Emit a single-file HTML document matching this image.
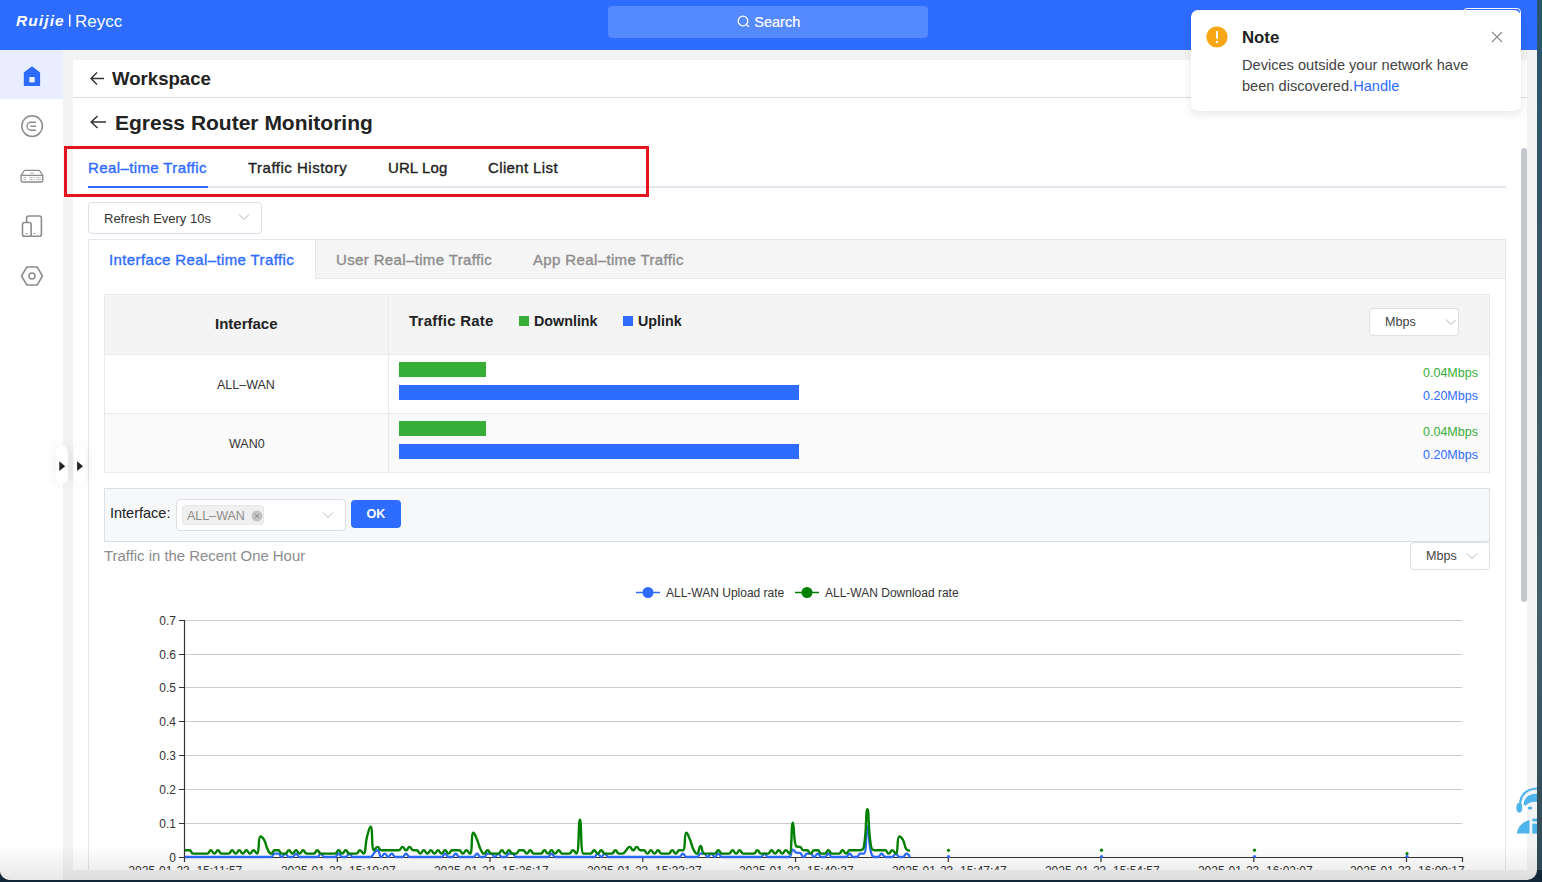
<!DOCTYPE html>
<html><head><meta charset="utf-8">
<style>
*{box-sizing:border-box;margin:0;padding:0}
html,body{width:1542px;height:882px;overflow:hidden}
body{background:#13293a;font-family:"Liberation Sans",sans-serif;position:relative;color:#222}
.abs{position:absolute}
.win{position:absolute;left:0;top:0;width:1537px;height:880px;background:#f3f3f3;border-radius:0 0 10px 10px;overflow:hidden}
.top{position:absolute;left:0;top:0;width:1537px;height:50px;background:#2e6bff}
.search{position:absolute;left:608px;top:6px;width:320px;height:32px;background:#5589ff;border-radius:4px;color:#fff;font-size:14.5px}
.side{position:absolute;left:0;top:50px;width:63px;height:830px;background:#fff}
.card{position:absolute;left:73px;top:60px;width:1454px;height:810px;background:#fff;overflow:hidden}
.t{position:absolute;white-space:nowrap;line-height:1}
.b{font-weight:700}
.m{font-weight:400;-webkit-text-stroke:0.35px currentColor}
</style></head><body>
<div class="abs" style="left:1537px;top:0;width:5px;height:870px;background:linear-gradient(#2a5670,#3b5862 40%,#44606a 70%,#2f4853)"></div>
<div class="win">
  <div class="top">
    <svg class="abs" style="left:0;top:0" width="140" height="50">
      <text x="16" y="25.6" font-family="Liberation Sans" font-weight="700" font-style="italic" font-size="15.5" fill="#fff" letter-spacing="1.1">Ruijie</text>
      <rect x="69" y="14.5" width="1.5" height="12" fill="#fff"/>
      <text x="75" y="26.5" font-family="Liberation Sans" font-size="17" fill="#fff">Reycc</text>
      <rect x="89.5" y="21" width="3" height="1.3" fill="#2ad0b0"/><rect x="108.5" y="21" width="3" height="1.3" fill="#2ad0b0"/><rect x="118" y="21" width="3" height="1.3" fill="#2ad0b0"/>
    </svg>
    <div class="search">
      <svg class="abs" style="left:128.5px;top:9.3px" width="13" height="13" viewBox="0 0 13 13"><circle cx="6" cy="6" r="4.8" fill="none" stroke="#fff" stroke-width="1.3"/><path d="M9.5 9.5L12 12" stroke="#fff" stroke-width="1.3"/></svg>
      <span class="t" style="left:146.3px;top:9px;-webkit-text-stroke:0.2px #fff">Search</span>
    </div>
    <div class="abs" style="left:1463px;top:8px;width:58px;height:32px;border:1px solid #fff;border-radius:4px"></div>
  </div>
  <div class="side">
    <div class="abs" style="left:0;top:0;width:63px;height:49px;background:#e8eeff"></div>
    <svg class="abs" style="left:0;top:0" width="63" height="260" viewBox="0 50 63 260">
      <path d="M23.8 72.6 L32 66.3 L40.1 72.6 V86 H23.8 Z" fill="#2e6bff"/>
      <rect x="29.3" y="77" width="5.4" height="5.4" fill="#e8eeff"/>
      <circle cx="32.1" cy="126.1" r="10.3" fill="none" stroke="#8c8c8c" stroke-width="1.5"/>
      <path d="M36 122.2 H31 A4 4 0 0 0 31 130.2 H36 M30.5 126.2 H36" fill="none" stroke="#8c8c8c" stroke-width="1.4"/>
      <path d="M24.6 170.4 H38.9 Q39.5 170.4 39.9 171 L42.8 175.4 V180.6 Q42.8 182 41.4 182 H22.5 Q21.1 182 21.1 180.6 V175.4 L24 171 Q24.2 170.4 24.6 170.4 Z M21.1 175.3 H42.8" fill="none" stroke="#8c8c8c" stroke-width="1.35"/>
      <path d="M29.3 177.6h5.2 M36.3 177.6h5 M29.3 179.6h5.2 M36.3 179.6h5 M23.5 177.6h3.3 M23.5 179.6h2.5" stroke="#9a9a9a" stroke-width="0.9" stroke-dasharray="1.1 0.5"/>
      <path d="M30 173.1h4" stroke="#b0b0b0" stroke-width="0.9"/>
      <rect x="26.6" y="216" width="14.8" height="20.2" rx="2" fill="none" stroke="#8c8c8c" stroke-width="1.6"/>
      <rect x="22.5" y="222.5" width="8.6" height="13.7" rx="1.8" fill="#fff" stroke="#8c8c8c" stroke-width="1.6"/>
      <path d="M25.5 233.5h2 M33.5 233.5h2" stroke="#8c8c8c" stroke-width="1.2"/>
      <path d="M21.5 276 L26.8 267 H37.2 L42.5 276 L37.2 285 H26.8 Z" fill="none" stroke="#8c8c8c" stroke-width="1.6"/>
      <circle cx="32" cy="276" r="3" fill="none" stroke="#8c8c8c" stroke-width="1.5"/>
    </svg>
  </div>
  <div class="card">
    <!-- header rows -->
    <svg class="abs" style="left:17px;top:11px" width="16" height="16"><path d="M1.5 7.5 H14 M7 1.5 L1 7.5 L7 13.5" fill="none" stroke="#333" stroke-width="1.4"/></svg>
    <span class="t b" style="left:39px;top:10px;font-size:18.6px;color:#222">Workspace</span>
    <div class="abs" style="left:0;top:37px;width:1454px;height:1px;background:#dcdcdc"></div>
    <svg class="abs" style="left:17px;top:55px" width="18" height="16"><path d="M1.5 7 H16 M7.5 1 L1.2 7 L7.5 13" fill="none" stroke="#333" stroke-width="1.5"/></svg>
    <span class="t b" style="left:42px;top:52px;font-size:21px;color:#222">Egress Router Monitoring</span>

    <!-- tabs -->
    <div class="abs" style="left:15px;top:126px;width:1418px;height:2px;background:#e4e7ed"></div>
    <div class="abs" style="left:15px;top:126px;width:120px;height:2px;background:#2e6bff"></div>
    <span class="t m" style="left:15px;top:100px;font-size:15px;letter-spacing:0.39px;color:#2e6bff">Real–time Traffic</span>
    <span class="t m" style="left:175px;top:100px;font-size:15px;letter-spacing:0.5px;color:#222">Traffic History</span>
    <span class="t m" style="left:315px;top:100px;font-size:15px;letter-spacing:0.1px;color:#222">URL Log</span>
    <span class="t m" style="left:415px;top:100px;font-size:15px;letter-spacing:0.37px;color:#222">Client List</span>

    <!-- refresh select -->
    <div class="abs" style="left:15px;top:142px;width:174px;height:32px;border:1px solid #dcdfe6;border-radius:4px"></div>
    <span class="t" style="left:31px;top:152px;font-size:13px;color:#333">Refresh Every 10s</span>
    <svg class="abs" style="left:165px;top:153px" width="12" height="8"><path d="M1 1.5 L6 6.5 L11 1.5" fill="none" stroke="#b4b4b4" stroke-width="1"/></svg>

    <!-- panel -->
    <div class="abs" style="left:15px;top:179px;width:1418px;height:700px;border:1px solid #e4e7ed;background:#fff"></div>
    <div class="abs" style="left:242px;top:179px;width:1191px;height:40px;background:#f5f5f5;border:1px solid #e4e7ed;border-left:1px solid #e4e7ed"></div>
    <span class="t m" style="left:36px;top:192px;font-size:15px;letter-spacing:0.38px;color:#2e6bff">Interface Real–time Traffic</span>
    <span class="t m" style="left:263px;top:192px;font-size:15px;letter-spacing:0.36px;color:#8c8c8c">User Real–time Traffic</span>
    <span class="t m" style="left:460px;top:192px;font-size:15px;letter-spacing:0.37px;color:#8c8c8c">App Real–time Traffic</span>

    <!-- table -->
    <div class="abs" style="left:31px;top:234px;width:1386px;height:179px;border:1px solid #e8eaf0"></div>
    <div class="abs" style="left:32px;top:235px;width:1384px;height:59px;background:#f4f4f5"></div>
    <div class="abs" style="left:32px;top:294px;width:1384px;height:1px;background:#e8eaf0"></div>
    <div class="abs" style="left:32px;top:354px;width:1384px;height:58px;background:#fafafa"></div>
    <div class="abs" style="left:32px;top:353px;width:1384px;height:1px;background:#e8eaf0"></div>
    <div class="abs" style="left:315px;top:235px;width:1px;height:177px;background:#e8eaf0"></div>
    <span class="t b" style="left:142px;top:256px;font-size:15px;color:#222">Interface</span>
    <span class="t b" style="left:336px;top:253.2px;font-size:15px;letter-spacing:0.25px;color:#222">Traffic Rate</span>
    <div class="abs" style="left:446px;top:256px;width:10px;height:10px;background:#36ae37"></div>
    <span class="t b" style="left:461px;top:253.5px;font-size:14.3px;color:#222">Downlink</span>
    <div class="abs" style="left:550px;top:256px;width:10px;height:10px;background:#2e6bff"></div>
    <span class="t b" style="left:565px;top:253.5px;font-size:14.3px;color:#222">Uplink</span>
    <div class="abs" style="left:1296px;top:248px;width:90px;height:28px;border:1px solid #dcdfe6;border-radius:4px;background:#fff"></div>
    <span class="t" style="left:1312px;top:255.5px;font-size:12.6px;color:#444">Mbps</span>
    <svg class="abs" style="left:1372px;top:258px" width="12" height="8"><path d="M1 1.5 L6 6.5 L11 1.5" fill="none" stroke="#b4b4b4" stroke-width="1"/></svg>

    <span class="t" style="left:144px;top:319px;font-size:12.5px;color:#333">ALL–WAN</span>
    <div class="abs" style="left:326px;top:302px;width:87px;height:15px;background:#36ae37"></div>
    <div class="abs" style="left:326px;top:325px;width:400px;height:15px;background:#2e6bff"></div>
    <span class="t" style="left:1350px;top:307px;font-size:12.5px;color:#36ae37">0.04Mbps</span>
    <span class="t" style="left:1350px;top:330px;font-size:12.5px;color:#2e6bff">0.20Mbps</span>

    <span class="t" style="left:156px;top:378px;font-size:12.5px;color:#333">WAN0</span>
    <div class="abs" style="left:326px;top:361px;width:87px;height:15px;background:#36ae37"></div>
    <div class="abs" style="left:326px;top:384px;width:400px;height:15px;background:#2e6bff"></div>
    <span class="t" style="left:1350px;top:366px;font-size:12.5px;color:#36ae37">0.04Mbps</span>
    <span class="t" style="left:1350px;top:389px;font-size:12.5px;color:#2e6bff">0.20Mbps</span>

    <!-- filter -->
    <div class="abs" style="left:31px;top:428px;width:1386px;height:54px;border:1px solid #dcdfe6;background:#f7f8fa"></div>
    <span class="t" style="left:37px;top:446px;font-size:14.5px;color:#222">Interface:</span>
    <div class="abs" style="left:103px;top:439px;width:170px;height:32px;border:1px solid #dcdfe6;border-radius:4px;background:#fff"></div>
    <div class="abs" style="left:109px;top:445px;width:82px;height:20px;background:#f0f0f0;border:1px solid #e6e6e6;border-radius:3px"></div>
    <span class="t" style="left:114px;top:450px;font-size:12.5px;color:#8c8c8c">ALL–WAN</span>
    <svg class="abs" style="left:178px;top:450px" width="12" height="12"><circle cx="6" cy="6" r="5.5" fill="#c4c4c4"/><path d="M3.8 3.8 L8.2 8.2 M8.2 3.8 L3.8 8.2" stroke="#8c8c8c" stroke-width="1"/></svg>
    <svg class="abs" style="left:249px;top:451px" width="12" height="8"><path d="M1 1.5 L6 6.5 L11 1.5" fill="none" stroke="#b4b4b4" stroke-width="1"/></svg>
    <div class="abs" style="left:278px;top:440px;width:50px;height:28px;background:#2e6bff;border-radius:4px"></div>
    <span class="t b" style="left:293.5px;top:447.5px;font-size:12.6px;color:#fff">OK</span>

    <span class="t" style="left:31px;top:489px;font-size:14.9px;color:#8c8c8c">Traffic in the Recent One Hour</span>
    <div class="abs" style="left:1337px;top:482px;width:80px;height:28px;border:1px solid #dcdfe6;border-radius:4px;background:#fff"></div>
    <span class="t" style="left:1353px;top:490px;font-size:12.6px;color:#444">Mbps</span>
    <svg class="abs" style="left:1393px;top:492px" width="12" height="8"><path d="M1 1.5 L6 6.5 L11 1.5" fill="none" stroke="#b4b4b4" stroke-width="1"/></svg>
  </div>

  <!-- chart (page coords) -->
  <svg class="abs" style="left:0;top:0" width="1537" height="870" viewBox="0 0 1537 870">
    <g font-family="Liberation Sans" font-size="12" fill="#333">
      <line x1="636" y1="592.5" x2="660" y2="592.5" stroke="#2e6bff" stroke-width="1.5"/>
      <circle cx="648" cy="592.5" r="5.5" fill="#2e6bff"/>
      <text x="666" y="597">ALL-WAN Upload rate</text>
      <line x1="795" y1="592.5" x2="819" y2="592.5" stroke="#008000" stroke-width="1.5"/>
      <circle cx="807" cy="592.5" r="5.5" fill="#008000"/>
      <text x="825" y="597">ALL-WAN Download rate</text>
    </g>
    <g stroke="#cccccc" stroke-width="1">
      <line x1="184" y1="620.5" x2="1462" y2="620.5"/>
      <line x1="184" y1="654.5" x2="1462" y2="654.5"/>
      <line x1="184" y1="687.5" x2="1462" y2="687.5"/>
      <line x1="184" y1="721.5" x2="1462" y2="721.5"/>
      <line x1="184" y1="755.5" x2="1462" y2="755.5"/>
      <line x1="184" y1="789.5" x2="1462" y2="789.5"/>
      <line x1="184" y1="823.5" x2="1462" y2="823.5"/>
    </g>
    <g stroke="#333" stroke-width="1.2" fill="none">
      <path d="M184.5 620 V857.5 H1462.5 V862"/>
      <path d="M179 620.5 H184 M179 654.5 H184 M179 687.5 H184 M179 721.5 H184 M179 755.5 H184 M179 789.5 H184 M179 823.5 H184 M179 857.5 H184"/>
      <path d="M184.5 857 V862 M337.3 857 V862 M490 857 V862 M642.8 857 V862 M795.5 857 V862 M948.3 857 V862 M1101 857 V862 M1253.8 857 V862 M1406.5 857 V862"/>
    </g>
    <g font-family="Liberation Sans" font-size="12" fill="#333" text-anchor="end">
      <text x="176" y="625">0.7</text><text x="176" y="659">0.6</text><text x="176" y="692">0.5</text><text x="176" y="726">0.4</text>
      <text x="176" y="760">0.3</text><text x="176" y="794">0.2</text><text x="176" y="828">0.1</text><text x="176" y="862">0</text>
    </g>
    <g font-family="Liberation Sans" font-size="12" fill="#333" text-anchor="middle" style="white-space:pre">
      <text x="185.3" y="875">2025-01-23 &#160;15:11:57</text><text x="338.3" y="875">2025-01-23 &#160;15:19:07</text><text x="491.3" y="875">2025-01-23 &#160;15:26:17</text>
      <text x="644.3" y="875">2025-01-23 &#160;15:33:27</text><text x="796.3" y="875">2025-01-23 &#160;15:40:37</text><text x="949.3" y="875">2025-01-23 &#160;15:47:47</text>
      <text x="1102.3" y="875">2025-01-23 &#160;15:54:57</text><text x="1255.3" y="875">2025-01-23 &#160;16:02:07</text><text x="1407.3" y="875">2025-01-23 &#160;16:09:17</text>
    </g>
    <path d="M184.90,857.00C184.90,857.00 185.45,857.00 186.00,857.00C187.77,857.00 187.77,857.00 189.55,857.00C191.32,857.00 191.32,857.00 193.10,857.00C194.87,857.00 194.87,857.00 196.65,857.00C198.42,857.00 198.42,857.00 200.20,857.00C201.97,857.00 201.97,857.00 203.75,857.00C205.52,857.00 205.52,857.00 207.29,857.00C209.07,857.00 209.07,857.00 210.84,857.00C212.62,857.00 212.62,857.00 214.39,857.00C216.17,857.00 216.17,857.00 217.94,857.00C219.72,857.00 219.72,857.00 221.49,857.00C223.26,857.00 223.26,857.00 225.04,857.00C226.81,857.00 226.81,857.00 228.59,857.00C230.36,857.00 230.36,857.00 232.14,857.00C233.91,857.00 233.91,857.00 235.69,857.00C237.46,857.00 237.46,857.00 239.24,857.00C241.01,857.00 241.01,857.00 242.78,857.00C244.56,857.00 244.56,857.00 246.33,857.00C248.11,857.00 248.11,857.00 249.88,857.00C251.66,857.00 251.66,857.00 253.43,857.00C255.21,857.00 255.21,857.00 256.98,857.00C258.75,857.00 258.75,857.00 260.53,857.00C262.30,857.00 262.30,857.00 264.08,857.00C265.85,857.00 265.85,857.00 267.63,857.00C269.40,857.00 269.68,857.00 271.18,857.00C273.23,857.00 272.67,853.64 274.73,853.64C276.22,853.64 276.78,853.64 278.27,853.64C280.33,853.64 280.05,857.00 281.82,857.00C283.60,857.00 283.60,853.64 285.37,853.64C287.15,853.64 286.86,857.00 288.92,857.00C290.41,857.00 290.98,857.00 292.47,857.00C294.53,857.00 294.24,853.64 296.02,853.64C297.79,853.64 297.51,857.00 299.57,857.00C301.06,857.00 301.34,857.00 303.12,857.00C304.89,857.00 304.89,857.00 306.67,857.00C308.44,857.00 308.44,857.00 310.22,857.00C311.99,857.00 311.99,857.00 313.76,857.00C315.54,857.00 315.82,857.00 317.31,857.00C319.37,857.00 319.09,853.64 320.86,853.64C322.64,853.64 322.35,857.00 324.41,857.00C325.90,857.00 326.19,857.00 327.96,857.00C329.73,857.00 329.73,857.00 331.51,857.00C333.28,857.00 333.57,857.00 335.06,857.00C337.11,857.00 336.83,853.64 338.61,853.64C340.38,853.64 340.10,857.00 342.16,857.00C343.65,857.00 344.21,857.00 345.70,857.00C347.76,857.00 347.48,853.64 349.25,853.64C351.03,853.64 350.75,857.00 352.80,857.00C354.30,857.00 354.58,857.00 356.35,857.00C358.13,857.00 358.13,857.00 359.90,857.00C361.68,857.00 361.68,857.00 363.45,857.00C365.22,857.00 365.22,857.00 367.00,857.00C368.77,857.00 369.14,857.00 370.55,857.00C372.69,857.00 372.16,854.80 374.10,852.96C375.71,851.44 376.34,850.27 377.65,850.27C379.88,850.27 379.03,857.00 381.19,857.00C382.58,857.00 382.97,853.64 384.74,853.64C386.52,853.64 386.52,857.00 388.29,857.00C390.07,857.00 390.07,853.64 391.84,853.64C393.62,853.64 393.33,857.00 395.39,857.00C396.88,857.00 397.17,857.00 398.94,857.00C400.71,857.00 401.00,857.00 402.49,857.00C404.55,857.00 404.26,853.64 406.04,853.64C407.81,853.64 407.53,857.00 409.59,857.00C411.08,857.00 411.36,857.00 413.14,857.00C414.91,857.00 414.91,857.00 416.69,857.00C418.46,857.00 418.46,857.00 420.23,857.00C422.01,857.00 422.01,857.00 423.78,857.00C425.56,857.00 425.56,857.00 427.33,857.00C429.11,857.00 429.11,857.00 430.88,857.00C432.66,857.00 432.66,857.00 434.43,857.00C436.20,857.00 436.20,857.00 437.98,857.00C439.75,857.00 440.04,857.00 441.53,857.00C443.58,857.00 443.30,853.64 445.08,853.64C446.85,853.64 446.57,857.00 448.63,857.00C450.12,857.00 450.68,857.00 452.18,857.00C454.23,857.00 453.95,853.64 455.72,853.64C457.50,853.64 457.22,857.00 459.27,857.00C460.77,857.00 461.05,857.00 462.82,857.00C464.60,857.00 464.60,857.00 466.37,857.00C468.15,857.00 468.15,857.00 469.92,857.00C471.69,857.00 471.98,857.00 473.47,857.00C475.53,857.00 475.24,853.64 477.02,853.64C478.79,853.64 478.51,857.00 480.57,857.00C482.06,857.00 482.62,857.00 484.12,857.00C486.17,857.00 485.61,853.64 487.67,853.64C489.16,853.64 489.72,853.64 491.21,853.64C493.27,853.64 492.99,857.00 494.76,857.00C496.54,857.00 496.54,853.64 498.31,853.64C500.09,853.64 499.80,857.00 501.86,857.00C503.35,857.00 503.92,857.00 505.41,857.00C507.47,857.00 506.90,853.64 508.96,853.64C510.45,853.64 511.02,853.64 512.51,853.64C514.56,853.64 514.00,857.00 516.06,857.00C517.55,857.00 517.83,857.00 519.61,857.00C521.38,857.00 521.38,857.00 523.15,857.00C524.93,857.00 524.93,857.00 526.70,857.00C528.48,857.00 528.48,857.00 530.25,857.00C532.03,857.00 532.03,857.00 533.80,857.00C535.58,857.00 535.58,857.00 537.35,857.00C539.13,857.00 539.13,857.00 540.90,857.00C542.67,857.00 542.67,857.00 544.45,857.00C546.22,857.00 546.51,857.00 548.00,857.00C550.05,857.00 549.77,853.64 551.55,853.64C553.32,853.64 553.04,857.00 555.10,857.00C556.59,857.00 556.87,857.00 558.64,857.00C560.42,857.00 560.42,857.00 562.19,857.00C563.97,857.00 563.97,857.00 565.74,857.00C567.52,857.00 567.52,857.00 569.29,857.00C571.07,857.00 571.07,857.00 572.84,857.00C574.62,857.00 574.62,857.00 576.39,857.00C578.16,857.00 578.16,857.00 579.94,857.00C581.71,857.00 581.71,857.00 583.49,857.00C585.26,857.00 585.26,857.00 587.04,857.00C588.81,857.00 588.81,857.00 590.59,857.00C592.36,857.00 592.64,857.00 594.13,857.00C596.19,857.00 595.91,853.64 597.68,853.64C599.46,853.64 599.46,857.00 601.23,857.00C603.01,857.00 603.01,853.64 604.78,853.64C606.56,853.64 606.27,857.00 608.33,857.00C609.82,857.00 610.11,857.00 611.88,857.00C613.65,857.00 613.65,857.00 615.43,857.00C617.20,857.00 617.20,857.00 618.98,857.00C620.75,857.00 620.75,857.00 622.53,857.00C624.30,857.00 624.30,857.00 626.08,857.00C627.85,857.00 627.85,857.00 629.62,857.00C631.40,857.00 631.40,857.00 633.17,857.00C634.95,857.00 634.95,857.00 636.72,857.00C638.50,857.00 638.50,857.00 640.27,857.00C642.05,857.00 642.05,857.00 643.82,857.00C645.60,857.00 645.60,857.00 647.37,857.00C649.14,857.00 649.14,857.00 650.92,857.00C652.69,857.00 652.69,857.00 654.47,857.00C656.24,857.00 656.24,857.00 658.02,857.00C659.79,857.00 659.79,857.00 661.57,857.00C663.34,857.00 663.34,857.00 665.12,857.00C666.89,857.00 666.89,857.00 668.66,857.00C670.44,857.00 670.44,857.00 672.21,857.00C673.99,857.00 673.99,857.00 675.76,857.00C677.54,857.00 677.82,857.00 679.31,857.00C681.37,857.00 681.09,853.64 682.86,853.64C684.63,853.64 684.35,857.00 686.41,857.00C687.90,857.00 688.18,857.00 689.96,857.00C691.73,857.00 691.73,857.00 693.51,857.00C695.28,857.00 695.56,857.00 697.06,857.00C699.11,857.00 698.55,853.64 700.61,853.64C702.10,853.64 702.66,853.64 704.15,853.64C706.21,853.64 705.93,857.00 707.70,857.00C709.48,857.00 709.48,853.64 711.25,853.64C713.03,853.64 713.03,857.00 714.80,857.00C716.58,857.00 716.58,853.64 718.35,853.64C720.12,853.64 719.84,857.00 721.90,857.00C723.39,857.00 723.67,857.00 725.45,857.00C727.22,857.00 727.22,857.00 729.00,857.00C730.77,857.00 730.77,857.00 732.55,857.00C734.32,857.00 734.32,857.00 736.10,857.00C737.87,857.00 737.87,857.00 739.64,857.00C741.42,857.00 741.42,857.00 743.19,857.00C744.97,857.00 744.97,857.00 746.74,857.00C748.52,857.00 748.52,857.00 750.29,857.00C752.07,857.00 752.07,857.00 753.84,857.00C755.61,857.00 755.61,857.00 757.39,857.00C759.16,857.00 759.45,857.00 760.94,857.00C762.99,857.00 762.71,853.64 764.49,853.64C766.26,853.64 765.98,857.00 768.04,857.00C769.53,857.00 769.81,857.00 771.59,857.00C773.36,857.00 773.36,857.00 775.13,857.00C776.91,857.00 776.91,857.00 778.68,857.00C780.46,857.00 780.46,857.00 782.23,857.00C784.01,857.00 784.01,857.00 785.78,857.00C787.56,857.00 788.26,857.00 789.33,857.00C791.81,857.00 790.62,849.60 792.88,849.60C794.17,849.60 794.42,852.19 796.43,852.63C797.97,852.96 798.56,852.63 799.98,852.96C802.11,853.47 801.67,857.00 803.53,857.00C805.22,857.00 805.02,853.64 807.07,853.64C808.57,853.64 809.13,853.64 810.62,853.64C812.68,853.64 812.40,857.00 814.17,857.00C815.95,857.00 815.95,853.64 817.72,853.64C819.50,853.64 819.21,857.00 821.27,857.00C822.76,857.00 823.33,857.00 824.82,857.00C826.88,857.00 826.59,853.64 828.37,853.64C830.14,853.64 829.86,857.00 831.92,857.00C833.41,857.00 833.69,857.00 835.47,857.00C837.24,857.00 837.24,857.00 839.02,857.00C840.79,857.00 840.79,857.00 842.56,857.00C844.34,857.00 844.62,857.00 846.11,857.00C848.17,857.00 847.89,853.64 849.66,853.64C851.44,853.64 851.16,857.00 853.21,857.00C854.70,857.00 855.27,857.00 856.76,857.00C858.82,857.00 858.25,853.64 860.31,853.64C861.80,853.64 863.46,853.64 863.86,853.64C867.01,853.64 865.59,826.05 867.41,826.05C869.14,826.05 868.05,839.63 870.96,852.29C871.60,855.11 872.29,857.00 874.51,857.00C875.84,857.00 876.56,857.00 878.05,857.00C880.11,857.00 879.83,853.64 881.60,853.64C883.38,853.64 883.10,857.00 885.15,857.00C886.65,857.00 886.93,857.00 888.70,857.00C890.48,857.00 890.76,857.00 892.25,857.00C894.31,857.00 894.03,853.64 895.80,853.64C897.57,853.64 897.29,857.00 899.35,857.00C900.84,857.00 901.41,857.00 902.90,857.00C904.95,857.00 904.67,853.64 906.45,853.64C908.22,853.64 910.00,857.00 910.00,857.00" fill="none" stroke="#2e6bff" stroke-width="2.3"/>
    <path d="M184.90,850.27C184.90,850.27 185.45,850.27 186.00,850.27C187.77,850.27 188.06,850.27 189.55,850.27C191.61,850.27 191.04,853.64 193.10,853.64C194.59,853.64 194.87,853.64 196.65,853.64C198.42,853.64 198.42,853.64 200.20,853.64C201.97,853.64 201.97,853.64 203.75,853.64C205.52,853.64 205.80,853.64 207.29,853.64C209.35,853.64 209.07,850.27 210.84,850.27C212.62,850.27 212.62,853.64 214.39,853.64C216.17,853.64 216.17,850.27 217.94,850.27C219.72,850.27 219.43,853.64 221.49,853.64C222.98,853.64 223.26,853.64 225.04,853.64C226.81,853.64 227.10,853.64 228.59,853.64C230.64,853.64 230.36,850.27 232.14,850.27C233.91,850.27 233.91,853.64 235.69,853.64C237.46,853.64 237.46,850.27 239.24,850.27C241.01,850.27 241.01,853.64 242.78,853.64C244.56,853.64 244.56,850.27 246.33,850.27C248.11,850.27 248.11,853.64 249.88,853.64C251.66,853.64 251.66,850.27 253.43,850.27C255.21,850.27 256.21,853.64 256.98,853.64C259.75,853.64 257.75,836.48 260.53,836.48C261.30,836.48 262.92,837.75 264.08,839.84C266.47,844.15 265.35,844.84 267.63,849.26C268.90,851.74 269.28,853.64 271.18,853.64C272.83,853.64 272.67,850.27 274.73,850.27C276.22,850.27 276.78,850.27 278.27,850.27C280.33,850.27 279.77,853.64 281.82,853.64C283.32,853.64 283.88,853.64 285.37,853.64C287.43,853.64 287.15,850.27 288.92,850.27C290.70,850.27 290.70,853.64 292.47,853.64C294.24,853.64 294.24,850.27 296.02,850.27C297.79,850.27 297.79,853.64 299.57,853.64C301.34,853.64 301.34,850.27 303.12,850.27C304.89,850.27 304.61,853.64 306.67,853.64C308.16,853.64 308.44,853.64 310.22,853.64C311.99,853.64 312.27,853.64 313.76,853.64C315.82,853.64 315.54,850.27 317.31,850.27C319.09,850.27 318.81,853.64 320.86,853.64C322.35,853.64 322.64,853.64 324.41,853.64C326.19,853.64 326.19,853.64 327.96,853.64C329.73,853.64 329.73,853.64 331.51,853.64C333.28,853.64 333.57,853.64 335.06,853.64C337.11,853.64 336.83,850.27 338.61,850.27C340.38,850.27 340.38,853.64 342.16,853.64C343.93,853.64 343.93,850.27 345.70,850.27C347.48,850.27 347.20,853.64 349.25,853.64C350.75,853.64 351.03,853.64 352.80,853.64C354.58,853.64 354.86,853.64 356.35,853.64C358.41,853.64 358.13,850.27 359.90,850.27C361.68,850.27 362.66,853.64 363.45,853.64C366.21,853.64 364.81,845.11 367.00,836.82C368.36,831.65 369.45,826.72 370.55,826.72C373.00,826.72 371.15,850.27 374.10,850.27C374.70,850.27 375.87,846.91 377.65,846.91C379.42,846.91 379.14,850.27 381.19,850.27C382.69,850.27 382.97,850.27 384.74,850.27C386.52,850.27 386.52,850.27 388.29,850.27C390.07,850.27 390.07,850.27 391.84,850.27C393.62,850.27 393.62,850.27 395.39,850.27C397.17,850.27 397.45,850.27 398.94,850.27C401.00,850.27 400.71,846.91 402.49,846.91C404.26,846.91 404.26,850.27 406.04,850.27C407.81,850.27 407.81,846.91 409.59,846.91C411.36,846.91 411.08,850.27 413.14,850.27C414.63,850.27 415.19,850.27 416.69,850.27C418.74,850.27 418.46,853.64 420.23,853.64C422.01,853.64 422.01,850.27 423.78,850.27C425.56,850.27 425.56,853.64 427.33,853.64C429.11,853.64 429.11,850.27 430.88,850.27C432.66,850.27 432.66,853.64 434.43,853.64C436.20,853.64 436.20,850.27 437.98,850.27C439.75,850.27 439.75,853.64 441.53,853.64C443.30,853.64 443.30,850.27 445.08,850.27C446.85,850.27 446.85,853.64 448.63,853.64C450.40,853.64 450.12,850.27 452.18,850.27C453.67,850.27 453.95,850.27 455.72,850.27C457.50,850.27 457.78,850.27 459.27,850.27C461.33,850.27 461.05,853.64 462.82,853.64C464.60,853.64 464.60,850.27 466.37,850.27C468.15,850.27 469.25,853.64 469.92,853.64C472.80,853.64 470.86,832.78 473.47,832.78C474.41,832.78 475.52,836.02 477.02,839.51C479.07,844.26 478.27,844.68 480.57,849.26C481.82,851.75 482.22,853.64 484.12,853.64C485.77,853.64 485.89,850.27 487.67,850.27C489.44,850.27 489.16,853.64 491.21,853.64C492.71,853.64 492.99,853.64 494.76,853.64C496.54,853.64 496.82,853.64 498.31,853.64C500.37,853.64 500.09,850.27 501.86,850.27C503.64,850.27 503.64,853.64 505.41,853.64C507.18,853.64 507.18,850.27 508.96,850.27C510.73,850.27 510.45,853.64 512.51,853.64C514.00,853.64 514.56,853.64 516.06,853.64C518.11,853.64 517.55,850.27 519.61,850.27C521.10,850.27 521.66,850.27 523.15,850.27C525.21,850.27 524.93,853.64 526.70,853.64C528.48,853.64 528.48,850.27 530.25,850.27C532.03,850.27 531.75,853.64 533.80,853.64C535.29,853.64 535.58,853.64 537.35,853.64C539.13,853.64 539.41,853.64 540.90,853.64C542.96,853.64 542.67,850.27 544.45,850.27C546.22,850.27 546.22,853.64 548.00,853.64C549.77,853.64 549.77,850.27 551.55,850.27C553.32,850.27 553.32,853.64 555.10,853.64C556.87,853.64 556.87,850.27 558.64,850.27C560.42,850.27 560.14,853.64 562.19,853.64C563.69,853.64 563.97,853.64 565.74,853.64C567.52,853.64 567.80,853.64 569.29,853.64C571.35,853.64 571.07,850.27 572.84,850.27C574.62,850.27 575.95,853.64 576.39,853.64C579.49,853.64 578.16,819.66 579.94,819.66C581.71,819.66 580.27,853.64 583.49,853.64C583.82,853.64 585.26,853.64 587.04,853.64C588.81,853.64 589.09,853.64 590.59,853.64C592.64,853.64 592.36,850.27 594.13,850.27C595.91,850.27 595.91,853.64 597.68,853.64C599.46,853.64 599.46,850.27 601.23,850.27C603.01,850.27 602.73,853.64 604.78,853.64C606.27,853.64 606.56,853.64 608.33,853.64C610.11,853.64 610.39,853.64 611.88,853.64C613.94,853.64 613.65,850.27 615.43,850.27C617.20,850.27 616.92,853.64 618.98,853.64C620.47,853.64 621.03,853.64 622.53,853.64C624.58,853.64 624.30,851.95 626.08,850.27C627.85,848.59 627.85,846.91 629.62,846.91C631.40,846.91 631.40,850.27 633.17,850.27C634.95,850.27 634.95,846.91 636.72,846.91C638.50,846.91 638.22,850.27 640.27,850.27C641.76,850.27 642.33,850.27 643.82,850.27C645.88,850.27 645.60,853.64 647.37,853.64C649.14,853.64 649.14,850.27 650.92,850.27C652.69,850.27 652.69,853.64 654.47,853.64C656.24,853.64 656.24,850.27 658.02,850.27C659.79,850.27 659.51,853.64 661.57,853.64C663.06,853.64 663.34,853.64 665.12,853.64C666.89,853.64 667.17,853.64 668.66,853.64C670.72,853.64 670.44,850.27 672.21,850.27C673.99,850.27 673.99,853.64 675.76,853.64C677.54,853.64 677.25,850.27 679.31,850.27C680.80,850.27 682.27,850.27 682.86,850.27C685.82,850.27 683.92,832.78 686.41,832.78C687.47,832.78 688.48,836.01 689.96,839.51C692.03,844.42 691.14,844.90 693.51,849.60C694.69,851.96 695.68,853.64 697.06,853.64C699.23,853.64 698.83,845.90 700.61,845.90C702.38,845.90 701.65,853.64 704.15,853.64C705.20,853.64 705.93,853.64 707.70,853.64C709.48,853.64 709.48,853.64 711.25,853.64C713.03,853.64 713.31,853.64 714.80,853.64C716.86,853.64 716.58,850.27 718.35,850.27C720.12,850.27 719.84,853.64 721.90,853.64C723.39,853.64 723.67,853.64 725.45,853.64C727.22,853.64 727.50,853.64 729.00,853.64C731.05,853.64 730.77,850.27 732.55,850.27C734.32,850.27 734.32,853.64 736.10,853.64C737.87,853.64 737.87,850.27 739.64,850.27C741.42,850.27 741.14,853.64 743.19,853.64C744.69,853.64 744.97,853.64 746.74,853.64C748.52,853.64 748.52,853.64 750.29,853.64C752.07,853.64 752.35,853.64 753.84,853.64C755.90,853.64 755.61,850.27 757.39,850.27C759.16,850.27 758.88,853.64 760.94,853.64C762.43,853.64 762.71,853.64 764.49,853.64C766.26,853.64 766.54,853.64 768.04,853.64C770.09,853.64 769.81,850.27 771.59,850.27C773.36,850.27 773.36,853.64 775.13,853.64C776.91,853.64 776.91,850.27 778.68,850.27C780.46,850.27 780.46,853.64 782.23,853.64C784.01,853.64 784.01,850.27 785.78,850.27C787.56,850.27 788.85,853.64 789.33,853.64C792.40,853.64 790.88,822.69 792.88,822.69C794.43,822.69 793.34,844.29 796.43,846.57C796.88,846.91 798.48,846.57 799.98,846.91C802.03,847.37 801.47,850.27 803.53,850.27C805.02,850.27 805.58,850.27 807.07,850.27C809.13,850.27 808.85,853.64 810.62,853.64C812.40,853.64 812.12,850.27 814.17,850.27C815.67,850.27 816.23,850.27 817.72,850.27C819.78,850.27 819.21,853.64 821.27,853.64C822.76,853.64 823.33,853.64 824.82,853.64C826.88,853.64 826.59,850.27 828.37,850.27C830.14,850.27 829.86,853.64 831.92,853.64C833.41,853.64 833.69,853.64 835.47,853.64C837.24,853.64 837.52,853.64 839.02,853.64C841.07,853.64 840.79,850.27 842.56,850.27C844.34,850.27 844.34,853.64 846.11,853.64C847.89,853.64 847.61,850.27 849.66,850.27C851.16,850.27 851.44,850.27 853.21,850.27C854.99,850.27 854.99,850.27 856.76,850.27C858.54,850.27 858.82,850.27 860.31,850.27C862.37,850.27 863.45,849.26 863.86,846.91C867.00,828.74 865.61,809.23 867.41,809.23C869.16,809.23 867.88,828.10 870.96,845.90C871.43,848.62 872.33,850.27 874.51,850.27C875.88,850.27 876.28,850.27 878.05,850.27C879.83,850.27 879.83,850.27 881.60,850.27C883.38,850.27 883.66,850.27 885.15,850.27C887.21,850.27 886.93,853.64 888.70,853.64C890.48,853.64 890.48,850.27 892.25,850.27C894.03,850.27 895.03,853.64 895.80,853.64C898.57,853.64 896.57,836.48 899.35,836.48C900.12,836.48 901.74,837.75 902.90,839.84C905.29,844.15 903.87,845.69 906.45,849.26C907.42,850.61 910.00,850.61 910.00,850.61" fill="none" stroke="#008000" stroke-width="2.4"/>
    <g fill="#2e6bff"><circle cx="948.5" cy="856.5" r="1.6"/><circle cx="1101.5" cy="856.5" r="1.6"/><circle cx="1254.5" cy="856.5" r="1.6"/><circle cx="1407" cy="856.5" r="1.6"/></g>
    <g fill="#008000"><circle cx="948.5" cy="850.3" r="1.6"/><circle cx="1101.5" cy="850.2" r="1.6"/><circle cx="1254.5" cy="850.2" r="1.6"/><circle cx="1407" cy="853.6" r="1.6"/></g>
  </svg>

  <!-- collapse pills -->
  <div class="abs" style="left:56px;top:446px;width:12px;height:38px;background:#fff;border-radius:6px;box-shadow:0 0 14px rgba(0,0,0,.07)"></div>
  <div class="abs" style="left:74px;top:446px;width:12px;height:38px;background:#fff;border-radius:6px;box-shadow:0 0 14px rgba(0,0,0,.07)"></div>
  <svg class="abs" style="left:56px;top:446px" width="32" height="40"><path d="M3.3 15.3 L9.2 20.2 L3.3 25 Z M21.1 15.3 L27 20.2 L21.1 25 Z" fill="#222"/></svg>

  <!-- red box -->
  <div class="abs" style="left:64px;top:146px;width:585px;height:51px;border:3px solid #e3141f"></div>
  <!-- scrollbar -->
  <div class="abs" style="left:1521px;top:148px;width:6px;height:454px;background:#c4c7cc;border-radius:3px"></div>
  <!-- AI icon -->
  <svg class="abs" style="left:1510px;top:780px" width="27" height="60" viewBox="1510 780 27 60">
    <path d="M1520 806 Q1520 789.5 1537 788.5" fill="none" stroke="#4db5ec" stroke-width="2.2"/>
    <path d="M1523.5 805 Q1524 794 1537 793.5 V802 Q1530 801 1526 805.5 Z" fill="#4db5ec"/>
    <ellipse cx="1519.3" cy="807.7" rx="3" ry="5" fill="#4db5ec"/>
    <ellipse cx="1530" cy="808" rx="2.3" ry="1.6" fill="#4db5ec"/>
    <path d="M1516.8 833.6 Q1518 823 1529.5 820 V833.6 Z" fill="#4db5ec"/>
    <rect x="1532.3" y="823.6" width="5" height="10" fill="#4db5ec"/>
    <rect x="1532.3" y="818.6" width="5" height="2.8" fill="#4db5ec"/>
  </svg>
  <!-- bottom gradient overlay -->
  <div class="abs" style="left:0;top:845px;width:1537px;height:35px;background:linear-gradient(rgba(0,0,0,0),rgba(0,0,0,.09))"></div>
</div>
<!-- notification -->
<div class="abs" style="left:1191px;top:10px;width:330px;height:101px;background:#fff;border-radius:7px;box-shadow:0 3px 10px rgba(0,0,0,.10)">
  <svg class="abs" style="left:15px;top:16px" width="22" height="22"><circle cx="11" cy="11" r="10.6" fill="#f7a616"/><rect x="10" y="5" width="2" height="8" rx="1" fill="#fff"/><circle cx="11" cy="16" r="1.2" fill="#fff"/></svg>
  <span class="t b" style="left:51px;top:20px;font-size:16.8px;color:#222">Note</span>
  <svg class="abs" style="left:300px;top:21px" width="12" height="12"><path d="M1 1 L11 11 M11 1 L1 11" stroke="#8a8a8a" stroke-width="1.1"/></svg>
  <span class="t" style="left:51px;top:48px;font-size:14.6px;color:#444">Devices outside your network have</span>
  <span class="t" style="left:51px;top:69px;font-size:14.6px;color:#444">been discovered.<span style="color:#2e6bff">Handle</span></span>
</div>
</body></html>
